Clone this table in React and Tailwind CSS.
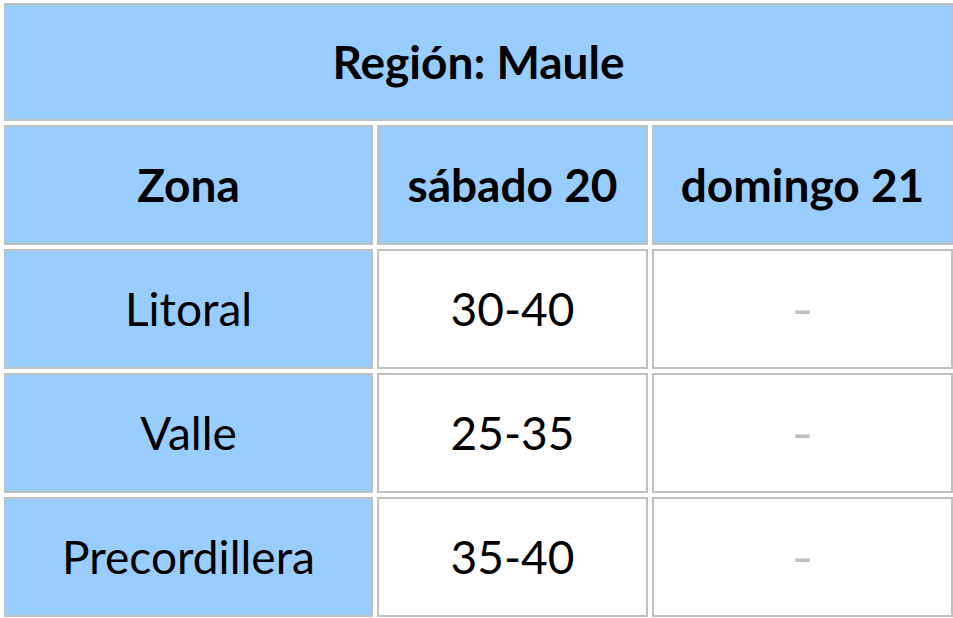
import React from "react";

const rows = [
  { zona: "Litoral", sab: "30-40", dom: "-" },
  { zona: "Valle", sab: "25-35", dom: "-" },
  { zona: "Precordillera", sab: "35-40", dom: "-" },
];

const cell = "flex items-center justify-center border-2 border-[#c0c0c0]";

export default function App() {
  return (
    <div className="w-[953px] h-[618px] bg-white pl-[4px] pt-[3px] font-['Lato',sans-serif] text-[46px] leading-none text-black">
      <div className="grid grid-cols-[369px_271px_301px] grid-rows-[118px_120px_120px_120px_120px] gap-[4px]">
        {/* title */}
        <div className={`${cell} col-span-3 bg-[#99ccff] font-bold`}>
          Región: Maule
        </div>

        {/* header row */}
        <div className={`${cell} bg-[#99ccff] font-bold`}>Zona</div>
        <div className={`${cell} bg-[#99ccff] font-bold`}>sábado 20</div>
        <div className={`${cell} bg-[#99ccff] font-bold`}>domingo 21</div>

        {rows.map((r) => (
          <React.Fragment key={r.zona}>
            <div className={`${cell} bg-[#99ccff]`}>{r.zona}</div>
            <div className={`${cell} bg-white`}>{r.sab}</div>
            <div className={`${cell} bg-white`}>
              <span className="inline-block scale-x-125 text-[#bdbdbd]">{r.dom}</span>
            </div>
          </React.Fragment>
        ))}
      </div>
    </div>
  );
}
